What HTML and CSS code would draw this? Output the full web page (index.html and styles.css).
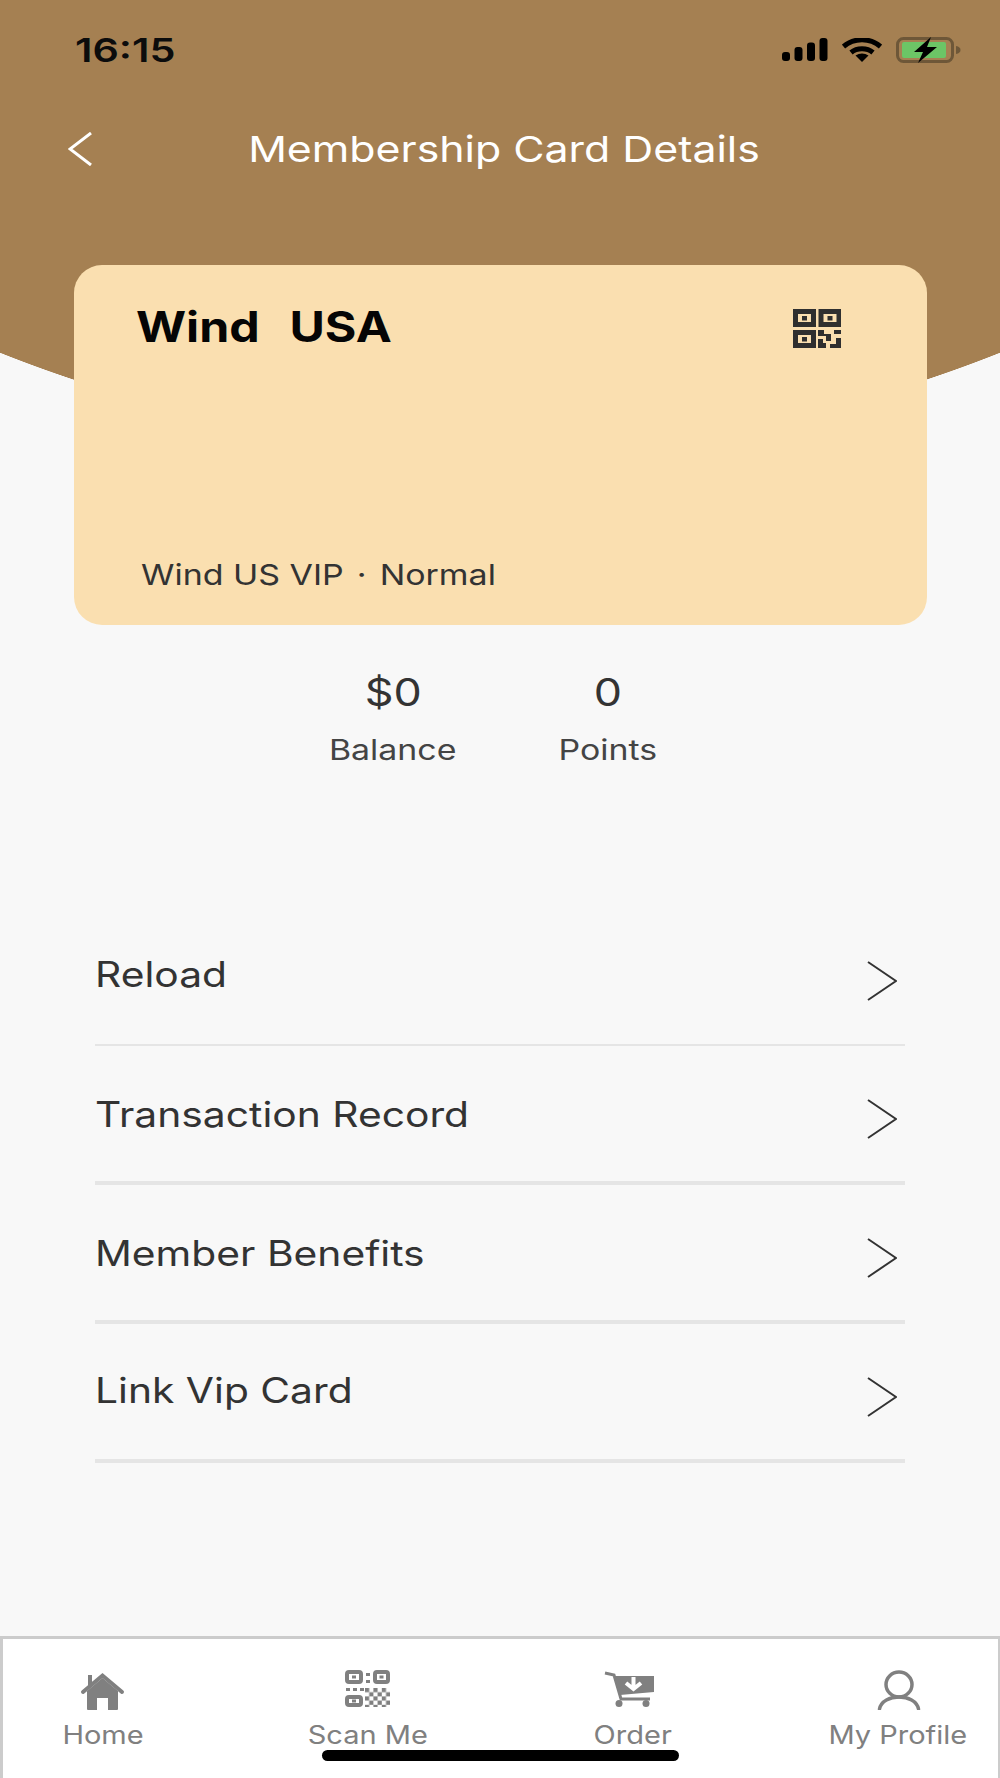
FILE: index.html
```html
<!DOCTYPE html>
<html lang="en">
<head>
    <meta charset="UTF-8">
    <meta name="viewport" content="width=device-width, initial-scale=1.0">
    <title>Membership Card Details</title>
    <link rel="stylesheet" href="styles.css">
</head>
<body>

    <div class="page">

        <!-- Status bar -->
        <div class="status-bar">
            <span class="time">16:15</span>
            <div class="status-icons">
                <svg width="46" height="24" viewBox="0 0 46 24">
                    <rect x="0" y="14" width="8" height="9" rx="3"/>
                    <rect x="12.500" y="9" width="8" height="14" rx="3"/>
                    <rect x="25" y="4.500" width="8" height="18.500" rx="3"/>
                    <rect x="37.500" y="0" width="8" height="23" rx="3"/>
                </svg>
                <svg width="40" height="24" viewBox="0 0 40 24">
                    <path class="wifi" d="M1.500 8.500C12 -0.500 28 -0.500 38.500 8.500"/>
                    <path class="wifi" d="M9 14.500C15 9.500 25 9.500 31 14.500"/>
                    <path d="M13.500 17.500C17.500 14.800 22.500 14.800 26.500 17.500L20 24Z"/>
                </svg>
                <svg width="66" height="26" viewBox="0 0 66 26">
                    <rect x="1.500" y="1.500" width="55" height="23" rx="6" fill="none" stroke="#6e5738" stroke-width="3"/>
                    <rect x="6" y="5" width="44" height="16" rx="2" fill="#6cc566"/>
                    <path d="M60 9C63 9.500 64.500 11 64.500 13C64.500 15 63 16.500 60 17Z" fill="#6e5738"/>
                    <path d="M35 0L18 15H27L22 26L41 10H31Z"/>
                </svg>
            </div>
        </div>

        <!-- Title row -->
        <div class="title-bar">
            <svg class="back" width="24" height="34" viewBox="0 0 24 34">
                <path d="M23 1L2 17L23 33"/>
            </svg>
            <h1 class="title">Membership Card Details</h1>
        </div>

        <!-- Member card -->
        <div class="card">
            <div class="card-top">
                <span class="card-name">Wind  USA</span>
                <svg class="card-qr" width="48" height="39" viewBox="0 0 48 39">
                    <g class="qr-finder">
                        <rect x="2.500" y="2.500" width="18" height="13"/>
                        <rect x="28" y="2.500" width="18" height="13"/>
                        <rect x="2.500" y="23.500" width="18" height="13"/>
                    </g>
                    <rect x="9" y="7" width="5" height="4.500"/>
                    <rect x="34.500" y="7" width="5" height="4.500"/>
                    <rect x="9" y="28" width="5" height="4.500"/>
                    <path d="M25 21H31V25H38V32H33V27H25ZM41 21H48V25H41ZM25 30H30V34H33V39H25ZM43 29H48V39H37V35H43Z"/>
                </svg>
            </div>
            <span class="card-level">Wind US VIP <span class="dot">·</span> Normal</span>
        </div>

        <!-- Balance and points -->
        <div class="stats">
            <div class="stat">
                <span class="stat-value">$0</span>
                <span class="stat-label">Balance</span>
            </div>
            <div class="stat">
                <span class="stat-value">0</span>
                <span class="stat-label">Points</span>
            </div>
        </div>

        <!-- Menu rows -->
        <div class="menu">
            <div class="menu-row menu-row-first">
                <span class="menu-text">Reload</span>
                <svg class="menu-arrow" width="30" height="40" viewBox="0 0 30 40"><path d="M1 1L29 20L1 39"/></svg>
            </div>
            <div class="menu-row">
                <span class="menu-text">Transaction Record</span>
                <svg class="menu-arrow" width="30" height="40" viewBox="0 0 30 40"><path d="M1 1L29 20L1 39"/></svg>
            </div>
            <div class="menu-row">
                <span class="menu-text">Member Benefits</span>
                <svg class="menu-arrow" width="30" height="40" viewBox="0 0 30 40"><path d="M1 1L29 20L1 39"/></svg>
            </div>
            <div class="menu-row">
                <span class="menu-text">Link Vip Card</span>
                <svg class="menu-arrow" width="30" height="40" viewBox="0 0 30 40"><path d="M1 1L29 20L1 39"/></svg>
            </div>
        </div>

        <!-- Bottom tabs -->
        <div class="tabs">
            <div class="tab">
                <svg width="60" height="40" viewBox="0 0 60 40">
                    <rect x="15" y="5" width="4" height="11"/>
                    <path d="M14 21L29.500 8L45 21V39Q45 40 44 40H35V28H24V40H15Q14 40 14 39Z"/>
                    <path class="roof" d="M10 22L29.500 5.500L49 22"/>
                </svg>
                <span>Home</span>
            </div>
            <div class="tab">
                <svg width="60" height="40" viewBox="0 0 60 40">
                    <defs>
                        <pattern id="checker" width="8.400" height="8.400" patternUnits="userSpaceOnUse" x="27" y="18">
                            <rect width="4.200" height="4.200"/>
                            <rect x="4.200" y="4.200" width="4.200" height="4.200"/>
                        </pattern>
                    </defs>
                    <g class="scan-finder">
                        <rect x="9" y="2" width="14" height="10" rx="2"/>
                        <rect x="37" y="2" width="13" height="10" rx="2"/>
                        <rect x="9" y="27" width="14" height="8" rx="2"/>
                    </g>
                    <rect x="14" y="5.500" width="4" height="3"/>
                    <rect x="41.500" y="5.500" width="4" height="3"/>
                    <rect x="14" y="29.500" width="4" height="3"/>
                    <rect x="28" y="3" width="4" height="3"/>
                    <rect x="28" y="10" width="4" height="3"/>
                    <rect x="8" y="18" width="4" height="3"/>
                    <rect x="15" y="18" width="4" height="3"/>
                    <rect x="22" y="18" width="4" height="3"/>
                    <rect x="27" y="18" width="25" height="19" fill="url(#checker)"/>
                </svg>
                <span>Scan Me</span>
            </div>
            <div class="tab">
                <svg width="60" height="40" viewBox="0 0 60 40">
                    <path class="cart-line" d="M2 3L11 5L18 29H47"/>
                    <path d="M12 6H51V22L17 25Z"/>
                    <path class="cart-arrow" d="M30.500 7V18M23 13L30.500 19L38 13"/>
                    <circle cx="16" cy="33.500" r="3.500"/>
                    <circle cx="43" cy="33.500" r="3.500"/>
                </svg>
                <span>Order</span>
            </div>
            <div class="tab">
                <svg width="60" height="40" viewBox="0 0 60 40">
                    <ellipse class="person" cx="31" cy="14.500" rx="13" ry="12.500"/>
                    <path class="person" d="M11.500 39C13 31 22 27 31 27C40 27 49 31 50.500 39"/>
                </svg>
                <span>My Profile</span>
            </div>
            <div class="home-indicator"></div>
        </div>

    </div>

</body>
</html>
```

FILE: styles.css
```css
* {
    box-sizing: border-box;
}

body {
    margin: 0;
    font-family: 'Inter', 'Liberation Sans', sans-serif;
    background-color: #f8f8f8;
}

.page {
    display: flex;
    flex-direction: column;
    height: 1778px;
    overflow: hidden;
    /* brown arc behind the header */
    background: radial-gradient(circle 1351px at 500px -902px, #a58052 99.95%, #f8f8f8 100%);
}

.status-bar {
    display: flex;
    justify-content: space-between;
    align-items: center;
    height: 100px;
    padding: 0 38px 0 75px;
}

/* the type on this screen runs wide, so text is stretched sideways */
.time {
    font-size: 33px;
    font-weight: 600;
    color: #0c0c0c;
    transform: scaleX(1.25);
    transform-origin: left;
}

.status-icons {
    display: flex;
    align-items: center;
    gap: 14px;
}

.wifi {
    fill: none;
    stroke: #000;
    stroke-width: 5;
}

.title-bar {
    display: flex;
    align-items: center;
    height: 100px;
    padding: 0 84px 2px 68px;
}

.back path {
    fill: none;
    stroke: #fff;
    stroke-width: 3;
}

.title {
    flex: 1;
    margin: 0;
    font-size: 36px;
    font-weight: 400;
    text-align: center;
    color: #fff;
    transform: scaleX(1.19);
}

.card {
    display: flex;
    flex-direction: column;
    justify-content: space-between;
    height: 360px;
    margin: 65px 73px 0 74px;
    padding: 37px 86px 33px 62px;
    background-color: #fadfb0;
    border-radius: 28px;
}

.card-top {
    display: flex;
    justify-content: space-between;
    align-items: flex-start;
}

.card-name {
    font-size: 42px;
    font-weight: 700;
    line-height: 50px;
    white-space: pre;
    word-spacing: 3px;
    color: #050505;
    transform: scaleX(1.15);
    transform-origin: left;
}

.card-qr {
    margin-top: 7px;
    fill: #2f2f2f;
}

.qr-finder {
    fill: none;
    stroke: #2f2f2f;
    stroke-width: 5;
}

.card-level {
    margin-left: 5px;
    font-size: 29px;
    color: #333;
    transform: scaleX(1.17);
    transform-origin: left;
}

.dot {
    margin: 0 3px;
}

.stats {
    display: flex;
    justify-content: center;
    gap: 122px;
    padding: 44px 11px 0 0;
}

.stat {
    display: flex;
    flex-direction: column;
    align-items: center;
    gap: 18px;
}

.stat-value {
    font-size: 38px;
    color: #333;
    transform: scaleX(1.18);
}

.stat-label {
    font-size: 28px;
    color: #444;
    transform: scaleX(1.21);
}

.menu {
    margin: 140px 95px 0 95px;
}

.menu-row {
    display: flex;
    justify-content: space-between;
    align-items: center;
    height: 139px;
    padding-right: 8px;
    border-bottom: 4px solid #e5e5e5;
}

.menu-row-first {
    border-bottom-width: 2px;
}

.menu-text {
    font-size: 35px;
    color: #333;
    transform: scaleX(1.165);
    transform-origin: left;
}

.menu-row-first .menu-text,
.menu-row:last-child .menu-text {
    margin-bottom: 4px;
}

.menu-arrow {
    margin-top: 10px;
}

.menu-arrow path {
    fill: none;
    stroke: #333;
    stroke-width: 2;
}

.tabs {
    position: relative;
    display: flex;
    justify-content: space-between;
    height: 142px;
    margin-top: auto;
    padding-top: 31px;
    background-color: #fff;
    border: 3px solid #ccc;
    border-bottom: none;
    border-right-width: 2px;
}

.tab {
    display: flex;
    flex-direction: column;
    align-items: center;
    width: 200px;
    font-size: 25px;
    color: #808080;
    fill: #808080;
}

.tab span {
    margin-top: 10px;
    transform: scaleX(1.16);
}

.roof {
    fill: none;
    stroke: #808080;
    stroke-width: 4;
    stroke-linecap: round;
}

.scan-finder {
    fill: none;
    stroke: #808080;
    stroke-width: 4;
}

.cart-line {
    fill: none;
    stroke: #808080;
    stroke-width: 3;
}

.cart-arrow {
    fill: none;
    stroke: #fff;
    stroke-width: 4;
}

.person {
    fill: none;
    stroke: #808080;
    stroke-width: 3.5;
    stroke-linecap: round;
}

.home-indicator {
    position: absolute;
    left: 319px;
    bottom: 17px;
    width: 357px;
    height: 11px;
    background-color: #000;
    border-radius: 6px;
}
```
